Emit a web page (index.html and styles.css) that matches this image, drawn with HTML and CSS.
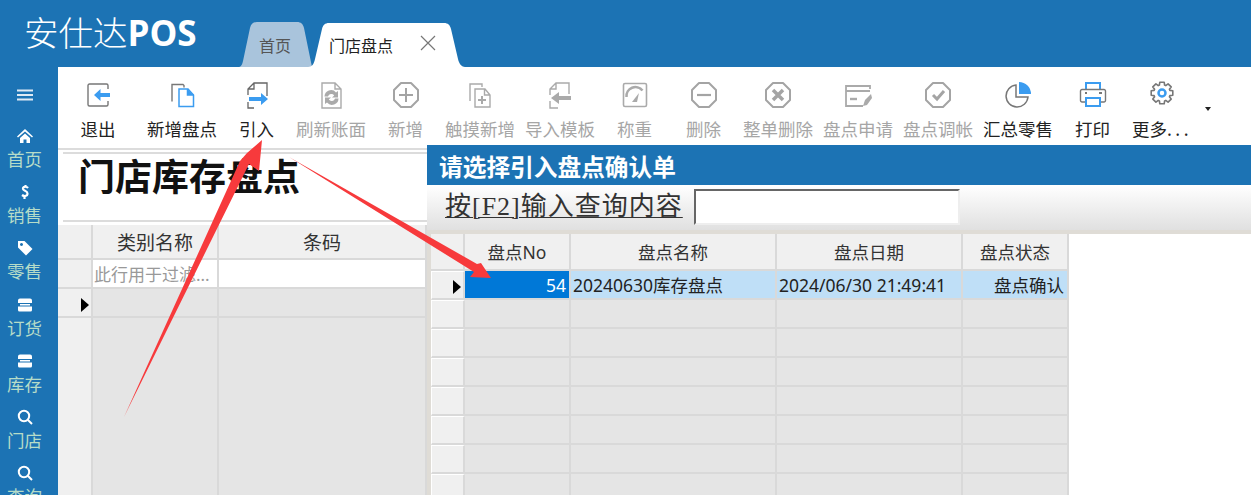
FILE: index.html
```html
<!DOCTYPE html>
<html lang="zh-CN">
<head>
<meta charset="utf-8">
<title>安仕达POS</title>
<link rel="stylesheet" href="styles.css">
</head>
<body>
<div class="app">
  <header class="topbar">
    <div class="logo">安仕达<b>POS</b></div>
    <nav class="tabs">
      <div class="tab tab-home">
        <svg class="tab-bg" viewBox="0 0 74 45" preserveAspectRatio="none"><path d="M0 45c3 0 4-2 5-6L12 6c1-4 3-6 7-6h40c4 0 6 2 7 6l8 39z" fill="#a9c4dc"/></svg>
        <span class="tab-label">首页</span>
      </div>
      <div class="tab tab-active">
        <svg class="tab-bg" viewBox="0 0 157 44" preserveAspectRatio="none"><path d="M0 44c4 0 6-3 7-8l7-30c1-4 3-6 7-6h115c4 0 6 2 7 6l7 30c1 5 4 8 7 8z" fill="#fff"/></svg>
        <span class="tab-label">门店盘点</span>
        <svg class="tab-close" viewBox="0 0 16 16"><path d="M1 1l14 14M15 1L1 15" stroke="#777" stroke-width="1.2" fill="none"/></svg>
      </div>
    </nav>
  </header>
  <div class="main">
    <aside class="sidebar">
      <svg class="menu-icon" viewBox="0 0 16 12"><path d="M0 1.500h16M0 6h16M0 10.500h16" stroke="#dfeaf4" stroke-width="2"/></svg>
      <div class="side-item">
        <svg viewBox="0 0 16 16"><path d="M8 1L0 8.500l1 1L8 3.500l7 6 1-1zM3 10v5h3.500v-3.500h3V15H13v-5L8 5.500z" fill="#fff"/></svg>
        <span>首页</span>
      </div>
      <div class="side-item">
        <svg viewBox="0 0 16 16"><path d="M11 4C9.500 2 5.500 2.500 6 5c.5 2 4.500 1.500 4.500 4.500 0 3-3.500 3-5.500 1.500M8.500 1v2M7.500 13v2" stroke="#fff" stroke-width="2.200" fill="none"/></svg>
        <span>销售</span>
      </div>
      <div class="side-item">
        <svg viewBox="0 0 16 16"><path d="M1 1h6.500L15.500 9 9 15.500 1 7.500zM4.500 3a1.500 1.500 0 1 0 .01 0z" fill="#fff" fill-rule="evenodd"/></svg>
        <span>零售</span>
      </div>
      <div class="side-item">
        <svg viewBox="0 0 16 16"><path d="M3 1.500h10a2 2 0 0 1 2 2V6H1V3.500a2 2 0 0 1 2-2zM1 9.500h14V13a1.500 1.500 0 0 1-1.500 1.500h-11A1.500 1.500 0 0 1 1 13zM3 7h10v1.500H3z" fill="#fff"/></svg>
        <span>订货</span>
      </div>
      <div class="side-item">
        <svg viewBox="0 0 16 16"><path d="M3 1.500h10a2 2 0 0 1 2 2V6H1V3.500a2 2 0 0 1 2-2zM1 9.500h14V13a1.500 1.500 0 0 1-1.500 1.500h-11A1.500 1.500 0 0 1 1 13zM3 7h10v1.500H3z" fill="#fff"/></svg>
        <span>库存</span>
      </div>
      <div class="side-item">
        <svg viewBox="0 0 16 16"><circle cx="7" cy="7" r="5.200" stroke="#fff" stroke-width="2" fill="none"/><path d="M11 11l4 4" stroke="#fff" stroke-width="2"/></svg>
        <span>门店</span>
      </div>
      <div class="side-item">
        <svg viewBox="0 0 16 16"><circle cx="7" cy="7" r="5.200" stroke="#fff" stroke-width="2" fill="none"/><path d="M11 11l4 4" stroke="#fff" stroke-width="2"/></svg>
        <span>查询</span>
      </div>
    </aside>

    <section class="content">
      <div class="toolbar">
        <div class="tool w2 first">
          <svg viewBox="0 0 28 28"><path d="M24 9V5.500A1.500 1.500 0 0 0 22.500 4h-17A1.500 1.500 0 0 0 4 5.500v19A1.500 1.500 0 0 0 5.500 26h17a1.500 1.500 0 0 0 1.500-1.500V21" transform="translate(0 -1)" stroke="#777" stroke-width="1.400" fill="none"/><path d="M10 14l6.500-6v4H26v4h-9.500v4z" fill="#3b9cf0"/></svg>
          <span>退出</span>
        </div>
        <div class="tool w4 gap-l">
          <svg viewBox="0 0 28 28"><path d="M4 20.500V3.500h11l1 1v2" stroke="#777" stroke-width="1.400" fill="none"/><path d="M11 8h9l5.500 6v11.500H11z" stroke="#3b9cf0" stroke-width="1.500" fill="#fff"/><path d="M19.500 8v6h6" stroke="#3b9cf0" stroke-width="1.500" fill="#3b9cf0"/></svg>
          <span>新增盘点</span>
        </div>
        <div class="tool w2 gap-m">
          <svg viewBox="0 0 28 28"><path d="M5 14V8l6-6h13v13M5 21v6h6M5 8h6V2" stroke="#666" stroke-width="1.300" fill="none"/><path d="M6 16h12v-4l7 6-7 6v-4H6z" fill="#3b9cf0"/></svg>
          <span>引入</span>
        </div>
        <div class="tool w4 gap-m off">
          <svg viewBox="0 0 28 28"><path d="M5 2h13l6 6v19H5zM18 2v6h6" stroke="#aaa" stroke-width="1.400" fill="none"/><path d="M7.500 15.500a6.500 6.500 0 0 1 11.500-4l2-1.500v6.500h-6l2.200-2a3.500 3.500 0 0 0-6.200 1zM21.500 17.500a6.500 6.500 0 0 1-11.500 4l-2 1.500v-6.500h6l-2.200 2a3.500 3.500 0 0 0 6.200-1z" fill="#aaa"/></svg>
          <span>刷新账面</span>
        </div>
        <div class="tool w2 gap-m off">
          <svg viewBox="0 0 28 28"><path d="M9 2h10l7 7v10l-7 7H9l-7-7V9z" stroke="#a4a4a4" stroke-width="2" fill="none" stroke-linejoin="round"/><path d="M14 7v14M7 14h14" stroke="#a4a4a4" stroke-width="2"/></svg>
          <span>新增</span>
        </div>
        <div class="tool w4 gap-m off">
          <svg viewBox="0 0 28 28"><path d="M4 20V3h12v3" stroke="#aaa" stroke-width="1.400" fill="none"/><path d="M9 8h10l5 6v12H9zM18.500 8v6H24" stroke="#aaa" stroke-width="1.400" fill="#fff"/><path d="M16 15v8M12 19h8" stroke="#aaa" stroke-width="2"/></svg>
          <span>触摸新增</span>
        </div>
        <div class="tool w4 gap-s off">
          <svg viewBox="0 0 28 28"><path d="M4 14V8l6-6h13v11M4 20v7h8M4 8h6V2" stroke="#aaa" stroke-width="1.400" fill="none"/><path d="M5 17l8-6v4h12v4H13v4z" fill="#aaa"/></svg>
          <span>导入模板</span>
        </div>
        <div class="tool w2 gap-m off">
          <svg viewBox="0 0 28 28"><rect x="2.500" y="2.500" width="23" height="23" rx="1.500" stroke="#aaa" stroke-width="1.600" fill="none"/><path d="M5.500 16a9 9 0 0 1 16-6.500" stroke="#aaa" stroke-width="2.500" fill="none"/><path d="M11 21l7-9-2 9z" fill="#aaa"/></svg>
          <span>称重</span>
        </div>
        <div class="tool w2 gap-l2 off">
          <svg viewBox="0 0 28 28"><path d="M9 2h10l7 7v10l-7 7H9l-7-7V9z" stroke="#a4a4a4" stroke-width="2" fill="none" stroke-linejoin="round"/><path d="M7 14h14" stroke="#a4a4a4" stroke-width="2.200"/></svg>
          <span>删除</span>
        </div>
        <div class="tool w4 gap-m off">
          <svg viewBox="0 0 28 28"><path d="M9 2h10l7 7v10l-7 7H9l-7-7V9z" stroke="#a4a4a4" stroke-width="2" fill="none" stroke-linejoin="round"/><path d="M9 9l10 10M19 9L9 19" stroke="#a4a4a4" stroke-width="3.500"/></svg>
          <span>整单删除</span>
        </div>
        <div class="tool w4 gap-s off">
          <svg viewBox="0 0 28 28"><path d="M26 8V5H2v20h17M2 10h24" stroke="#aaa" stroke-width="1.800" fill="none"/><path d="M6 18h7" stroke="#aaa" stroke-width="2.400"/><path d="M19 25l2-6 6-6 1 4-5 7z" fill="#aaa"/></svg>
          <span>盘点申请</span>
        </div>
        <div class="tool w4 gap-s off">
          <svg viewBox="0 0 28 28"><path d="M9 2h10l7 7v10l-7 7H9l-7-7V9z" stroke="#a4a4a4" stroke-width="2" fill="none" stroke-linejoin="round"/><path d="M9 14l4 4 7-8" stroke="#a4a4a4" stroke-width="3" fill="none"/></svg>
          <span>盘点调帐</span>
        </div>
        <div class="tool w4 gap-s">
          <svg viewBox="0 0 28 28"><path d="M12 4a11 11 0 1 0 12 12H12z" stroke="#777" stroke-width="1.500" fill="none"/><path d="M15 1a12 12 0 0 1 12 12H15z" fill="#3b9cf0"/></svg>
          <span>汇总零售</span>
        </div>
        <div class="tool w2 gap-m">
          <svg viewBox="0 0 28 28"><path d="M7 8V2h14v6M7 24V17h14v8H7z" stroke="#3b9cf0" stroke-width="2" fill="none"/><path d="M6 21H3a1.500 1.500 0 0 1-1.500-1.500V10A1.500 1.500 0 0 1 3 8.500h22a1.500 1.500 0 0 1 1.500 1.500v9.500A1.500 1.500 0 0 1 25 21h-3" stroke="#777" stroke-width="1.400" fill="none"/><path d="M6 12h2M20 12h3" stroke="#777" stroke-width="2"/></svg>
          <span>打印</span>
        </div>
        <div class="tool more gap-m">
          <svg viewBox="0 0 28 28"><polygon transform="translate(14 12)" points="7.900,-2.600 10.800,-2.200 10.800,2.200 7.900,2.600 7.420,3.750 9.190,6.080 6.080,9.190 3.750,7.420 2.600,7.900 2.200,10.800 -2.200,10.800 -2.600,7.900 -3.750,7.420 -6.080,9.190 -9.190,6.080 -7.420,3.750 -7.900,2.600 -10.800,2.200 -10.800,-2.200 -7.900,-2.600 -7.420,-3.750 -9.190,-6.080 -6.080,-9.190 -3.750,-7.420 -2.600,-7.900 -2.200,-10.800 2.200,-10.800 2.600,-7.900 3.750,-7.420 6.080,-9.190 9.190,-6.080 7.420,-3.750" stroke="#777" stroke-width="1.600" fill="none" stroke-linejoin="round"/><circle cx="14" cy="12" r="3.500" stroke="#3b9cf0" stroke-width="2.500" fill="none"/></svg>
          <span>更多<i class="dots">...</i></span>
        </div>
        <div class="caret"></div>
      </div>

      <div class="page">
        <h1 class="page-title">门店库存盘点</h1>
        <table class="grid left-grid">
          <colgroup><col class="c-head"><col class="c-type"><col></colgroup>
          <tr class="grid-head"><th></th><th>类别名称</th><th>条码</th></tr>
          <tr class="filter-row"><td class="row-head plain"></td><td class="hint">此行用于过滤...</td><td></td></tr>
          <tr class="data-row"><td class="row-head plain"><i class="pointer"></i></td><td></td><td></td></tr>
          <tr class="fill-row"><td class="row-head plain"></td><td></td><td></td></tr>
        </table>
      </div>

      <div class="dialog">
        <div class="dialog-title">请选择引入盘点确认单</div>
        <div class="search-bar">
          <label class="search-label">按[F2]输入查询内容</label>
          <div class="search-input"></div>
        </div>
        <div class="dialog-body">
          <table class="grid picker-grid">
            <colgroup><col class="p-head"><col class="p-no"><col class="p-name"><col class="p-date"><col class="p-state"></colgroup>
            <tr class="picker-head"><th></th><th>盘点No</th><th>盘点名称</th><th>盘点日期</th><th>盘点状态</th></tr>
            <tr class="picker-row selected"><td class="row-head"><i class="pointer"></i></td><td class="active-cell num">54</td><td>20240630库存盘点</td><td>2024/06/30 21:49:41</td><td class="num">盘点确认</td></tr>
            <tr class="picker-row"><td class="row-head"></td><td></td><td></td><td></td><td></td></tr>
            <tr class="picker-row"><td class="row-head"></td><td></td><td></td><td></td><td></td></tr>
            <tr class="picker-row"><td class="row-head"></td><td></td><td></td><td></td><td></td></tr>
            <tr class="picker-row"><td class="row-head"></td><td></td><td></td><td></td><td></td></tr>
            <tr class="picker-row"><td class="row-head"></td><td></td><td></td><td></td><td></td></tr>
            <tr class="picker-row"><td class="row-head"></td><td></td><td></td><td></td><td></td></tr>
            <tr class="picker-row"><td class="row-head"></td><td></td><td></td><td></td><td></td></tr>
          </table>
        </div>
      </div>
    </section>
  </div>

  <svg class="annotations" viewBox="0 0 1251 495">
    <polygon points="262,140 259,171 249,164 124,417 240,161 247,153" fill="#f73a3c"/>
    <polygon points="289,157 477,264 481,263 491,278 470,277 474,272" fill="#f73a3c"/>
  </svg>
</div>
</body>
</html>
```

FILE: styles.css
```css
* { box-sizing: border-box; }
html, body { margin: 0; height: 100%; overflow: hidden; }
body {
  font-family: "Noto Sans CJK SC", "Noto Sans", sans-serif;
  background: #fff;
  color: #222;
}
.app {
  position: relative;
  display: flex;
  flex-direction: column;
  height: 495px;
  overflow: hidden;
  background: #1c73b4;
}

/* header */
.topbar {
  display: flex;
  flex: none;
  height: 67px;
  padding-left: 24px;
}
.logo {
  width: 214px;
  padding-top: 7px;
  color: #fff;
  font-size: 34.500px;
  font-weight: 300;
  line-height: 48px;
  white-space: nowrap;
}
.logo b { font-family: "Open Sans", sans-serif; font-weight: 700; font-size: 35px; }
.tabs { display: flex; align-items: flex-end; }
.tab {
  position: relative;
  display: flex;
  align-items: center;
  height: 45px;
  font-size: 16px;
  color: #555;
}
.tab-bg { position: absolute; inset: 0; width: 100%; height: 100%; }
.tab-label { position: relative; }
.tab-home { width: 74px; padding-left: 21px; padding-top: 1px; }
.tab-active { width: 157px; height: 44px; margin-left: -4px; padding-left: 21px; color: #222; }
.tab-close { position: relative; width: 16px; height: 16px; margin-left: 27px; margin-top: -4px; }

.main { display: flex; flex: 1; min-height: 0; }

/* sidebar */
.sidebar {
  display: flex;
  flex: none;
  flex-direction: column;
  align-items: center;
  width: 58px;
  padding: 22px 9px 0 0;
  color: #b6dcc8;
}
.menu-icon { flex: none; width: 16px; height: 12px; margin-bottom: 27px; }
.side-item {
  display: flex;
  flex: none;
  flex-direction: column;
  align-items: center;
  height: 56.200px;
}
.side-item svg { flex: none; width: 16px; height: 16px; }
.side-item span { font-size: 17.500px; line-height: 24px; margin-top: 3px; white-space: nowrap; }

/* content */
.content {
  position: relative;
  display: flex;
  flex: 1;
  flex-direction: column;
  min-width: 0;
  background: #fff;
}
.toolbar {
  display: flex;
  flex: none;
  height: 83px;
  padding-left: 22px;
  border-bottom: 2px solid #dcdcdc;
}
.tool {
  display: flex;
  flex: none;
  flex-direction: column;
  align-items: center;
  padding-top: 14px;
  font-size: 17.500px;
  line-height: 24px;
  white-space: nowrap;
}
.tool svg { flex: none; width: 28px; height: 28px; margin-bottom: 8px; }
.w2 { width: 36px; }
.w4 { width: 70px; }
.more { width: 60px; }
.off { color: #a6a6a6; }
.gap-s { margin-left: 10px; }
.gap-m { margin-left: 21.500px; }
.gap-l { margin-left: 31px; }
.gap-l2 { margin-left: 33px; }
.dots { font-style: normal; letter-spacing: 3.500px; }
.caret {
  flex: none;
  width: 0;
  height: 0;
  margin: 40px 0 0 13px;
  border: 3.500px solid transparent;
  border-top: 4px solid #222;
}

/* left page */
.page { flex: 1; min-height: 0; padding-top: 2px; }
.page-title {
  height: 70px;
  margin: 0 0 3px 5px;
  padding: 0 0 0 15px;
  border-top: 2px solid #dcdcdc;
  border-bottom: 2px solid #dcdcdc;
  font-size: 37px;
  line-height: 42px;
  font-weight: 700;
  color: #111;
  white-space: nowrap;
}

/* grids */
.grid {
  table-layout: fixed;
  border-collapse: separate;
  border-spacing: 0;
}
.grid th, .grid td {
  padding: 0;
  border-right: 2px solid #d9d9d9;
  border-bottom: 2px solid #d9d9d9;
  background: #e5e5e5;
  font-family: "Noto Sans", "Noto Sans CJK SC", sans-serif;
  font-size: 17.500px;
  font-weight: 400;
  white-space: nowrap;
  overflow: hidden;
}
.grid th { background: #f0f0f0; color: #333; text-align: center; }
.left-grid { width: 369px; }
.c-head { width: 35px; }
.c-type { width: 126px; }
.grid-head th { height: 35px; font-size: 19px; }
.filter-row td { height: 29px; background: #fff; }
.filter-row .row-head, .data-row .row-head, .fill-row .row-head { background: #f0f0f0; }
.filter-row .hint { padding-left: 1px; color: #999; font-size: 17px; }
.data-row td { height: 29px; }
.fill-row td { height: 200px; }
.row-head { text-align: right; vertical-align: middle; }
.grid .plain { border-right-width: 2px; }
.pointer {
  display: inline-block;
  width: 0;
  height: 0;
  margin-right: 2px;
  border-top: 7px solid transparent;
  border-bottom: 7px solid transparent;
  border-left: 8px solid #000;
  vertical-align: middle;
}

/* dialog */
.dialog {
  position: absolute;
  top: 78px;
  left: 369px;
  right: 0;
  bottom: 0;
  display: flex;
  flex-direction: column;
  background: #fff;
}
.dialog-title {
  flex: none;
  height: 40px;
  padding-left: 12px;
  background: #1c73b4;
  color: #fff;
  font-size: 23.700px;
  font-weight: 700;
  line-height: 43px;
  white-space: nowrap;
}
.search-bar {
  display: flex;
  flex: none;
  align-items: flex-start;
  height: 49px;
  padding: 4px 0 0 18px;
  background: linear-gradient(#fff, #e0e0e0);
  border-bottom: 4px solid #dfdcd6;
}
.search-label {
  width: 249px;
  padding-top: 2px;
  font-family: "Liberation Serif", "Noto Sans CJK SC", serif;
  font-size: 26px;
  line-height: 32px;
  letter-spacing: 1px;
  color: #333;
  text-decoration: underline;
  text-underline-offset: 2px;
  text-decoration-thickness: 1px;
  white-space: nowrap;
}
.search-input {
  width: 266px;
  height: 36px;
  background: #fff;
  border: 2px solid #eee;
  border-top-color: #666;
  border-left-color: #666;
}
.dialog-body { flex: 1; min-height: 0; padding-left: 4px; background: linear-gradient(90deg, #dfdcd6 4px, #fff 4px); overflow: hidden; }
.picker-grid { width: 638px; }
.p-head { width: 34px; }
.p-no { width: 106px; }
.p-name { width: 206px; }
.p-date { width: 186px; }
.p-state { width: 106px; }
.picker-head th { height: 37px; }
.picker-row td { height: 29px; }
.picker-row .row-head { background: #f0f0f0; border-top: 1px solid #fff; border-left: 1px solid #fff; }
.selected td { background: #bfdff7; padding-left: 2px; color: #222; }
.selected .active-cell { background: #0078d7; color: #fff; }
.selected .row-head { padding-left: 0; }
.num { text-align: right; padding-right: 3px !important; }

/* annotations */
.annotations {
  position: absolute;
  inset: 0;
  width: 1251px;
  height: 495px;
  pointer-events: none;
}
```
